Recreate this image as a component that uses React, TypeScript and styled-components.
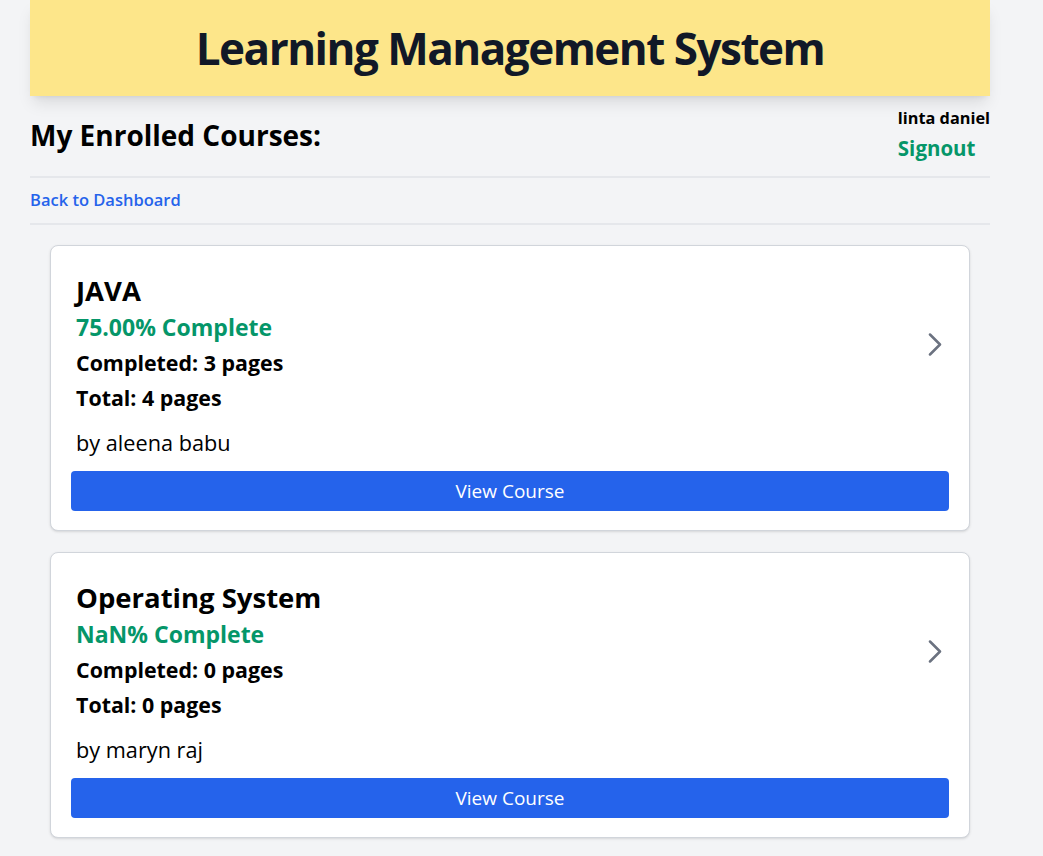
import React from "react";
import styled, { createGlobalStyle } from "styled-components";

const Global = createGlobalStyle`
  html, body { margin: 0; padding: 0; background: #f3f4f6; }
  body { font-family: "Open Sans", "Noto Sans", sans-serif; color: #000; }
  * { box-sizing: border-box; }
`;

const Page = styled.div`
  width: 960px;
  margin-left: 30px;
  padding-bottom: 20px;
`;

const Header = styled.header`
  height: 96px;
  background: #fde68a;
  box-shadow: 0 10px 15px -3px rgba(0,0,0,0.1), 0 4px 6px -4px rgba(0,0,0,0.1);
  display: flex;
  align-items: center;
  justify-content: center;
`;

const Title = styled.h1`
  margin: 0;
  font-size: 44px;
  letter-spacing: -1.5px;
  font-weight: 700;
  color: #111827;
`;

const TopRow = styled.div`
  display: flex;
  justify-content: space-between;
  align-items: flex-start;
  padding: 10px 0 14px;
  border-bottom: 2px solid #e5e7eb;
`;

const Heading = styled.h2`
  margin: 11px 0 0;
  font-size: 28px;
  line-height: 36px;
  font-weight: 700;
`;

const User = styled.div`
  display: flex;
  flex-direction: column;
  align-items: flex-start;
`;

const UserName = styled.span`
  font-size: 16.3px;
  line-height: 24px;
  font-weight: 700;
`;

const Signout = styled.a`
  margin-top: 4px;
  font-size: 20.5px;
  line-height: 28px;
  font-weight: 700;
  color: #059669;
`;

const NavRow = styled.div`
  padding: 10px 0 11px;
  border-bottom: 2px solid #e5e7eb;
`;

const BackLink = styled.a`
  display: block;
  font-size: 16.5px;
  line-height: 24px;
  font-weight: 600;
  color: #2563eb;
`;

const List = styled.div`
  display: flex;
  flex-direction: column;
  gap: 21px;
  padding: 20px 20px 0;
`;

const Card = styled.div`
  background: #fff;
  border: 1px solid #d1d5db;
  border-radius: 8px;
  box-shadow: 0 1px 3px rgba(0,0,0,0.1), 0 1px 2px -1px rgba(0,0,0,0.1);
  padding: 20px 20px 19px;
`;

const CardBody = styled.div`
  display: flex;
  align-items: center;
  justify-content: space-between;
  padding: 7px 5px 0;
`;

const Info = styled.div`
  display: flex;
  flex-direction: column;
`;

const CourseName = styled.h3`
  margin: 0;
  font-size: 27.5px;
  font-weight: 700;
  line-height: 36px;
`;

const Progress = styled.div`
  font-size: 23px;
  font-weight: 700;
  color: #059669;
  line-height: 36px;
`;

const Stat = styled.div`
  font-size: 21.4px;
  font-weight: 700;
  line-height: 35px;
`;

const Author = styled.div`
  margin-top: 12px;
  padding: 0 5px;
  font-size: 21.7px;
  line-height: 32px;
`;

const Chevron = styled.svg`
  width: 14px;
  height: 23px;
  color: #6b7280;
  margin-right: 2px;
`;

const ViewButton = styled.button`
  display: block;
  width: 100%;
  height: 40px;
  margin-top: 12px;
  background: #2563eb;
  color: #fff;
  border: none;
  border-radius: 4px;
  font-family: inherit;
  font-size: 19px;
  font-weight: 500;
`;

const courses = [
  { name: "JAVA", pct: "75.00%", done: 3, total: 4, by: "aleena babu" },
  { name: "Operating System", pct: "NaN%", done: 0, total: 0, by: "maryn raj" },
];

export default function App() {
  return (
    <>
      <Global />
      <Page>
        <Header>
          <Title>Learning Management System</Title>
        </Header>
        <TopRow>
          <Heading>My Enrolled Courses:</Heading>
          <User>
            <UserName>linta daniel</UserName>
            <Signout>Signout</Signout>
          </User>
        </TopRow>
        <NavRow>
          <BackLink>Back to Dashboard</BackLink>
        </NavRow>
        <List>
          {courses.map((c) => (
            <Card key={c.name}>
              <CardBody>
                <Info>
                  <CourseName>{c.name}</CourseName>
                  <Progress>{c.pct} Complete</Progress>
                  <Stat>Completed: {c.done} pages</Stat>
                  <Stat>Total: {c.total} pages</Stat>
                </Info>
                <Chevron viewBox="0 0 14 23" fill="none" stroke="currentColor" strokeWidth={2.5} strokeLinecap="round" strokeLinejoin="round">
                  <path d="M2 1.5 L12 11.5 L2 21.5" />
                </Chevron>
              </CardBody>
              <Author>by {c.by}</Author>
              <ViewButton>View Course</ViewButton>
            </Card>
          ))}
        </List>
      </Page>
    </>
  );
}
